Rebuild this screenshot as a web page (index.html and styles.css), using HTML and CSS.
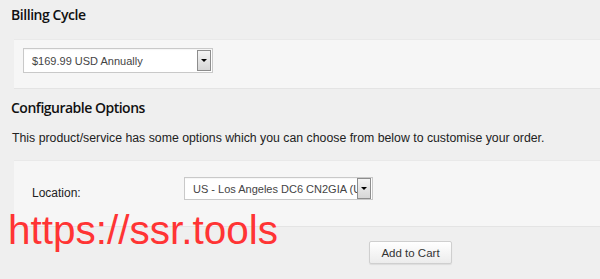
FILE: index.html
```html
<!DOCTYPE html>
<html>
<head>
	<title>Configure Product</title>
	<meta charset="utf-8">
	<link rel="stylesheet" href="styles.css">
</head>
<body>

	<div class="main">
		<h2>Billing Cycle</h2>
		<div class="panel panel_billing">
			<div class="select select_cycle">
				<span class="select_text">$169.99 USD Annually</span>
				<span class="select_arrow"></span>
			</div>
		</div>

		<h2 class="configure">Configurable Options</h2>
		<p class="info">This product/service has some options which you can choose from below to customise your order.</p>

		<div class="panel panel_options">
			<div class="option_row">
				<label class="option_label">Location:</label>
				<div class="select select_location">
					<span class="select_text">US - Los Angeles DC6 CN2GIA (USA)</span>
					<span class="select_arrow"></span>
				</div>
			</div>
		</div>

		<div class="actions">
			<button class="cart">Add to Cart</button>
		</div>

		<div class="watermark">https://ssr.tools</div>
	</div>

</body>
</html>
```

FILE: styles.css
```css
* {
	box-sizing: border-box;
}

body {
	margin: 0px;
	padding: 0px;
	background: #efefef;
	font-family: "Liberation Sans", Arial, sans-serif;
	font-size: 12px;
	color: #222;
	overflow: hidden;
}

.main {
	position: relative;
	padding: 5px 0px 0px 11px;
	min-height: 279px;
}

h2 {
	font-family: "Open Sans", sans-serif;
	font-weight: 600;
	font-size: 14px;
	line-height: 20px;
	color: #111;
	margin: 0px;
	letter-spacing: -0.45px;
}

.panel {
	margin-left: 3px;
	background: #f6f6f6;
	border-top: 1px solid #e9e9e9;
	border-bottom: 1px solid #e4e4e4;
}

.panel_billing {
	margin-top: 14px;
	padding: 8px 0px 15px 9px;
}

.configure {
	margin-top: 9px;
	letter-spacing: -0.5px;
}

.info {
	margin: 11px 0px 0px 1px;
	line-height: 18px;
	font-size: 12.3px;
}

.select {
	display: flex;
	align-items: center;
	background: white;
	border: 1px solid #c9c9c9;
	box-shadow: inset 0px 1px 1px rgba(0,0,0,0.04);
	font-size: 11px;
	color: #444;
	overflow: hidden;
	padding-right: 1px;
}

.select_text {
	flex: 1;
	white-space: nowrap;
	overflow: hidden;
	padding-left: 8px;
}

.select_arrow {
	position: relative;
	width: 14px;
	height: 21px;
	border: 1px solid #8d8d8d;
	background: linear-gradient(#f4f4f4, #d6d6d6);
	flex-shrink: 0;
}

.select_arrow::after {
	content: "";
	position: absolute;
	left: 3px;
	top: 8px;
	border-left: 3px solid transparent;
	border-right: 3px solid transparent;
	border-top: 3px solid black;
}

.select_cycle {
	width: 190px;
	height: 25px;
}

.panel_options {
	margin-top: 13px;
	padding: 16px 0px 24px 18px;
}

.option_row {
	display: flex;
	align-items: flex-start;
}

.option_label {
	width: 152px;
	padding-top: 7px;
	line-height: 18px;
	font-size: 12px;
}

.select_location {
	width: 189px;
	height: 23px;
}

.select_location .select_arrow {
	height: 21px;
}

.actions {
	padding: 14px 0px 0px 358px;
}

.cart {
	width: 83px;
	height: 23px;
	border: 1px solid #cfcfcf;
	border-radius: 2px;
	background: linear-gradient(#ffffff, #ececec);
	box-shadow: 0px 1px 1px rgba(0,0,0,0.08);
	font-family: "Liberation Sans", Arial, sans-serif;
	font-size: 11.5px;
	color: #333;
	padding: 0px;
	cursor: pointer;
}

.watermark {
	position: absolute;
	left: 8px;
	top: 206px;
	font-family: "Liberation Sans", Arial, sans-serif;
	font-size: 40.5px;
	line-height: 48px;
	color: #ff3434;
}
```
